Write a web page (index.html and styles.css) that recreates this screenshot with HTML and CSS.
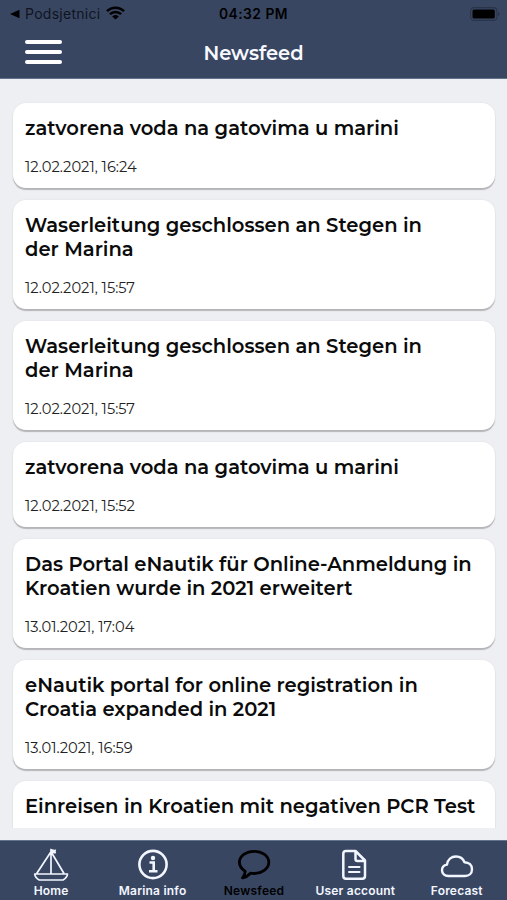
FILE: index.html
```html
<!DOCTYPE html>
<html lang="en">
<head>
<meta charset="utf-8">
<title>Newsfeed</title>
<link rel="stylesheet" href="styles.css">
</head>
<body>
<div class="app">
  <header class="header">
    <div class="status">
      <div class="back">
        <svg width="10" height="10" viewBox="0 0 10 10"><path d="M0 5 9.5 .7v8.6z"/></svg>
        <span class="back-label">Podsjetnici</span>
        <svg class="wifi" width="19" height="14" viewBox="0 0 19 14"><path d="M1 5.2a12 12 0 0 1 17 0M3.9 8.2a8 8 0 0 1 11.2 0" fill="none" stroke="#000" stroke-width="2.5"/><path d="M9.5 13.5 6.2 10.4q3.3-2.6 6.6 0z"/></svg>
      </div>
      <span class="time">04:32 PM</span>
      <svg class="battery" width="30" height="14" viewBox="0 0 30 14"><rect x=".6" y=".6" width="26.300" height="12.800" rx="3.500" fill="none" stroke="#2a3449" stroke-width="1.100"/><rect x="2.500" y="2.500" width="22.300" height="9" rx="1.500"/><path d="M28 4.600q3 2.400 0 4.800z" fill="#2a3449"/></svg>
    </div>
    <div class="bar">
      <button class="menu" aria-label="Menu"><span></span><span></span><span></span></button>
      <h1>Newsfeed</h1>
    </div>
  </header>
  <main class="feed">
    <article class="card"><h2>zatvorena voda na gatovima u marini</h2><time>12.02.2021, 16:24</time></article>
    <article class="card"><h2>Waserleitung geschlossen an Stegen in<br>der Marina</h2><time>12.02.2021, 15:57</time></article>
    <article class="card"><h2>Waserleitung geschlossen an Stegen in<br>der Marina</h2><time>12.02.2021, 15:57</time></article>
    <article class="card"><h2>zatvorena voda na gatovima u marini</h2><time>12.02.2021, 15:52</time></article>
    <article class="card"><h2>Das Portal eNautik für Online-Anmeldung in<br>Kroatien wurde in 2021 erweitert</h2><time>13.01.2021, 17:04</time></article>
    <article class="card"><h2>eNautik portal for online registration in<br>Croatia expanded in 2021</h2><time>13.01.2021, 16:59</time></article>
    <article class="card"><h2>Einreisen in Kroatien mit negativen PCR Test</h2></article>
  </main>
  <nav class="tabs">
    <a class="tab"><svg viewBox="0 0 36 36"><g fill="none" stroke="currentColor" stroke-width="1.700" stroke-linejoin="round"><path d="M18 26.500V2.500M17.500 5.500 3.700 26.500M18.500 5.500 31 26.500M1.700 27h32.800q-.3 3.500-4.500 6H6.200q-4.200-2.500-4.500-6z"/></g><path d="M17.400 1.500q2 1.500 5.800 1-1 2 0 3.800-3 .4-5.800-.8z" fill="currentColor"/></svg><span>Home</span></a>
    <a class="tab"><svg viewBox="0 0 36 36"><circle cx="18" cy="17.500" r="13.600" fill="none" stroke="currentColor" stroke-width="2.600"/><circle cx="18" cy="11" r="2.200" fill="currentColor"/><path d="M14.500 15.500h4.200v8.500M14 24.200h8.500" fill="none" stroke="currentColor" stroke-width="2.600"/></svg><span>Marina info</span></a>
    <a class="tab active"><svg viewBox="0 0 36 36"><path d="M18.200 4.300c8 0 14.600 4.800 14.600 11s-6.600 11.200-14.600 11.200q-2 0-3.700-.3-3.300 3.700-8 4.700 2.800-3.300 2.600-6.700C5.500 22 3.400 18.900 3.400 15.300c0-6.200 6.700-11 14.800-11z" fill="none" stroke="currentColor" stroke-width="2.800" stroke-linejoin="round"/></svg><span>Newsfeed</span></a>
    <a class="tab"><svg viewBox="0 0 36 36"><g fill="none" stroke="currentColor" stroke-width="2.500" stroke-linejoin="round" stroke-linecap="round"><path d="M9 4H18.500l9.500 9.500v15.500q0 2.700-2.700 2.700H9q-2.700 0-2.700-2.700V6.700Q6.300 4 9 4zM18.500 4v8q0 2 2 2h7.500"/><path d="M12 20h10.500M12 25h10.500" stroke-width="2"/></g></svg><span>User account</span></a>
    <a class="tab"><svg viewBox="0 0 36 36"><path d="M9.500 29C5.500 29 3 26.600 3 23.200c0-3 2-5.100 5-5.600C8.700 12.500 12.300 9.500 17 9.500c4 0 7 2.100 8.500 5.700 4.600.1 7.500 3 7.500 7 0 4.200-3 6.800-7 6.800z" fill="none" stroke="currentColor" stroke-width="2.400" stroke-linejoin="round"/></svg><span>Forecast</span></a>
  </nav>
</div>
</body>
</html>
```
FILE: styles.css
```css
* { box-sizing: border-box; }
body { margin: 0; font-family: Montserrat, Inter, sans-serif; background: #eeeff3; }
.app { display: flex; flex-direction: column; width: 507px; height: 900px; overflow: hidden; }
.header { flex: none; height: 79px; background: #394662; border-bottom: 1px solid #61748b; }
.status { display: grid; grid-template-columns: 1fr auto 1fr; align-items: center; height: 27px; padding: 0 7px 0 10px; font-family: Inter, sans-serif; }
.back { display: flex; align-items: center; }
.back-label { margin: 0 5px; width: 76px; font-size: 14px; letter-spacing: .28px; color: #0f141e; white-space: nowrap; }
.wifi { margin-top: -2px; }
.time { margin-left: -3px; font-size: 13.8px; font-weight: 600; letter-spacing: .5px; }
.battery { justify-self: end; }
.bar { display: grid; grid-template-columns: 63px 1fr 63px; align-items: center; height: 51px; }
.menu { display: flex; flex-direction: column; gap: 6px; width: 37px; margin: -1px 0 0 25px; padding: 0; border: 0; background: none; }
.menu span { width: 37px; height: 4px; border-radius: 2px; background: #fff; }
h1 { margin: 0; text-align: center; color: #f7f9ff; font-size: 19.5px; font-weight: 600; }
.feed { flex: none; display: flex; flex-direction: column; gap: 12px; height: 749px; padding: 24px 12px 0 13px; overflow: hidden; }
.card { flex: none; padding: 13px 12px 12px; border-radius: 13px; background: #fff; box-shadow: 0 2px 1px #b5b5b9, 0 0 2px #dddde2; }
h2 { margin: 0 0 18px; font-size: 19.55px; line-height: 24px; font-weight: 600; color: #0b0b0b; white-space: nowrap; }
time { display: block; height: 18px; line-height: 19px; font-size: 14.65px; color: #222; }
.tabs { flex: none; display: grid; grid-template-columns: repeat(5, 1fr); height: 60px; margin-top: 12px; background: #394662; border-top: 1px solid #61748b; }
.tab { display: flex; flex-direction: column; align-items: center; padding: 6px 0 0 1px; color: #f2f6ff; }
.tab svg { display: block; width: 36px; height: 36px; }
.tab span { font: 600 12px/16px Inter, sans-serif; letter-spacing: .2px; white-space: nowrap; }
.tab.active { color: #000; }
```
